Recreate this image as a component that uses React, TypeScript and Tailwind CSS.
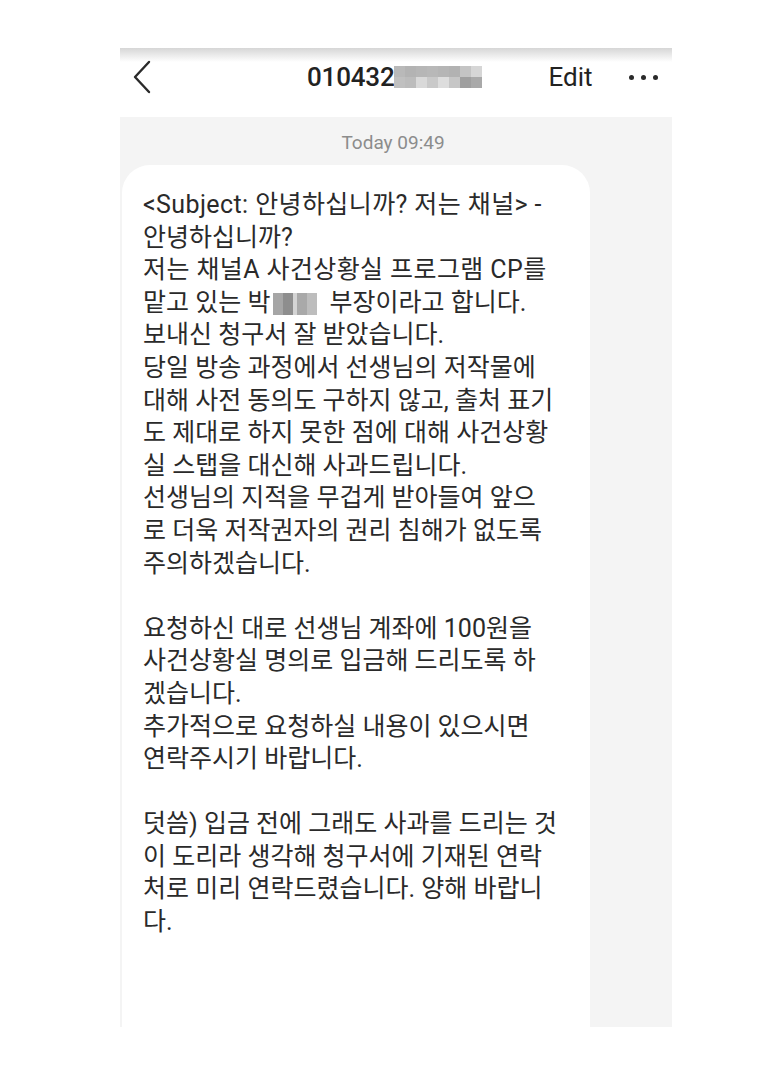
import React from "react";

const titleBlur = [
  ["#b9b9b9", "#b3b3b3", "#b6b6b6", "#b8b8b8", "#b5b5b5", "#b2b2b2", "#c4c4c4", "#d6d6d6"],
  ["#c0c0c0", "#bcbcbc", "#d9d9d9", "#c9c9c9", "#dddddd", "#c6c6c6", "#9f9f9f", "#a9a9a9"],
];

const nameBlur = ["#a6a6a6", "#8e8e8e", "#d4d4d4", "#a9a9a9", "#bdbdbd"];

const lines: (string | null)[] = [
  "<Subject: 안녕하십니까? 저는 채널> -",
  "안녕하십니까?",
  "저는 채널A 사건상황실 프로그램 CP를",
  "NAME",
  "보내신 청구서 잘 받았습니다.",
  "당일 방송 과정에서 선생님의 저작물에",
  "대해 사전 동의도 구하지 않고, 출처 표기",
  "도 제대로 하지 못한 점에 대해 사건상황",
  "실 스탭을 대신해 사과드립니다.",
  "선생님의 지적을 무겁게 받아들여 앞으",
  "로 더욱 저작권자의 권리 침해가 없도록",
  "주의하겠습니다.",
  null,
  "요청하신 대로 선생님 계좌에 100원을",
  "사건상황실 명의로 입금해 드리도록 하",
  "겠습니다.",
  "추가적으로 요청하실 내용이 있으시면",
  "연락주시기 바랍니다.",
  null,
  "덧씀) 입금 전에 그래도 사과를 드리는 것",
  "이 도리라 생각해 청구서에 기재된 연락",
  "처로 미리 연락드렸습니다. 양해 바랍니",
  "다.",
];

export default function App() {
  return (
    <div className="min-h-[1080px] w-full bg-white pl-[120px] pt-[48px] font-['Roboto','Noto_Sans_CJK_KR',sans-serif]">
      <div className="w-[552px]">
        {/* header */}
        <div className="h-[14px] bg-gradient-to-b from-[#d6d6d6] to-white" />
        <div className="flex h-[55px] items-center bg-white pb-[25px]">
          <svg width="22" height="34" viewBox="0 0 22 34" className="ml-[12px]">
            <path d="M17 2 L3 17 L17 32" fill="none" stroke="#2a2a2a" strokeWidth="2.4" strokeLinecap="round" strokeLinejoin="round" />
          </svg>
          <div className="ml-[153px] flex items-center">
            <span className="text-[26px] font-medium leading-none tracking-[-0.2px] text-[#222]">010432</span>
            <div className="flex flex-col">
              {titleBlur.map((row, r) => (
                <div key={r} className="flex">
                  {row.map((c, i) => (
                    <div key={i} className="h-[11px] w-[11px]" style={{ backgroundColor: c }} />
                  ))}
                </div>
              ))}
            </div>
          </div>
          <span className="ml-[66px] text-[26px] leading-none text-[#222]">Edit</span>
          <div className="ml-[36px] flex gap-[7px]">
            <span className="h-[5px] w-[5px] rounded-full bg-[#2a2a2a]" />
            <span className="h-[5px] w-[5px] rounded-full bg-[#2a2a2a]" />
            <span className="h-[5px] w-[5px] rounded-full bg-[#2a2a2a]" />
          </div>
        </div>

        {/* conversation */}
        <div className="h-[910px] overflow-hidden bg-[#f4f4f4]">
          <div className="pt-[14px] pr-[6px] text-center text-[19px] leading-[24px] text-[#8c8c8c]">Today 09:49</div>
          <div className="mt-[10px] ml-[2px] h-[900px] w-[468px] rounded-t-[28px] bg-white pl-[21px] pt-[24px] text-[25px] leading-[32.6px] text-[#2a2a2a]">
            {lines.map((l, i) =>
              l === null ? (
                <div key={i} className="h-[32.6px]" />
              ) : l === "NAME" ? (
                <div key={i} className="flex items-center whitespace-nowrap">
                  <span>맡고 있는 박</span>
                  <span className="ml-[3px] mr-[6px] mt-[2px] flex h-[22px]">
                    {nameBlur.map((c, j) => (
                      <span key={j} className={j === 2 ? "w-[4px]" : "w-[10px]"} style={{ backgroundColor: c }} />
                    ))}
                  </span>
                  <span>&nbsp;부장이라고 합니다.</span>
                </div>
              ) : (
                <div key={i} className={i === 0 || i === 2 ? "whitespace-nowrap tracking-[0.4px]" : "whitespace-nowrap"}>
                  {l}
                </div>
              )
            )}
          </div>
        </div>
      </div>
    </div>
  );
}
